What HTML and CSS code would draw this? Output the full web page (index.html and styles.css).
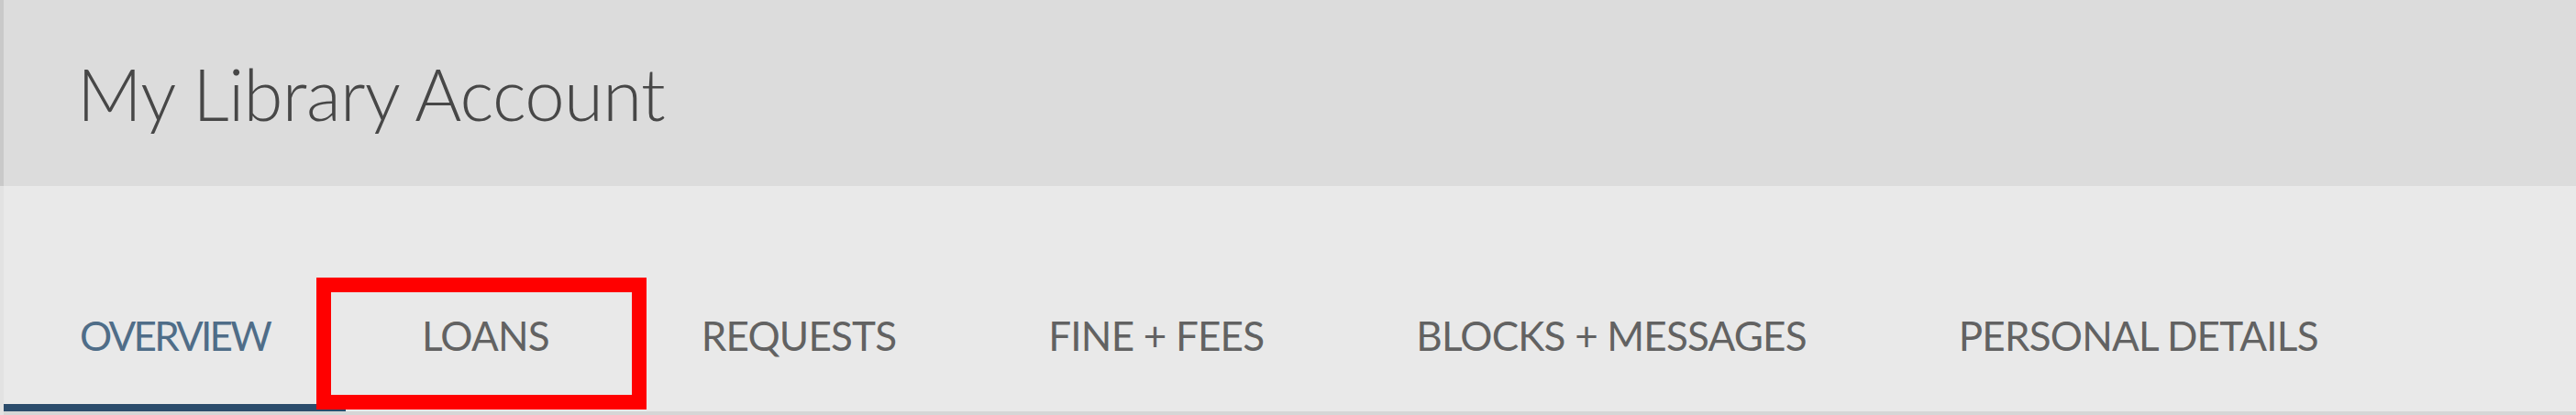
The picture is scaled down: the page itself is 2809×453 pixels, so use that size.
FILE: index.html
```html
<!DOCTYPE html>
<html lang="en">
<head>
  <meta charset="UTF-8">
  <title>My Library Account</title>
  <meta name="viewport" content="width=device-width, initial-scale=1.0">
  <link rel="stylesheet" href="styles.css">
</head>
<body>
  <header class="page-header">
    <h1>My Library Account</h1>
  </header>

  <nav class="account-tabs">
    <ul>
      <li class="active"><a href="#overview">OVERVIEW</a></li>
      <li class="marked"><a href="#loans">LOANS</a></li>
      <li><a href="#requests">REQUESTS</a></li>
      <li><a href="#fines">FINE + FEES</a></li>
      <li><a href="#blocks">BLOCKS + MESSAGES</a></li>
      <li><a href="#personal">PERSONAL DETAILS</a></li>
    </ul>
  </nav>
</body>
</html>
```

FILE: styles.css
```css
body {
  font-family: Lato, 'Open Sans', sans-serif;
  background: #e9e9e9;
  margin: 0;
  padding: 0;
  color: #444;
}
.page-header {
  height: 203px;
  display: flex;
  align-items: center;
  background: #dcdcdc;
  border-left: 4px solid #c9c9c9;
  padding-left: 80px;
}
.page-header h1 {
  margin: 0;
  font-size: 78px;
  font-weight: 300;
  color: #474747;
  letter-spacing: -0.7px;
}
.account-tabs {
  border-left: 4px solid #e2e2e2;
}
.account-tabs ul {
  list-style: none;
  margin: 0;
  padding: 133px 0 0;
  display: flex;
  border-bottom: 4px solid #d6d6d6;
}
.account-tabs li {
  position: relative;
}
.account-tabs a {
  display: block;
  padding: 0 83px 45px;
  line-height: 60px;
  font-size: 44px;
  letter-spacing: -0.8px;
  color: #626262;
  text-decoration: none;
  border-bottom: 8px solid transparent;
}
.account-tabs .active a {
  color: #4f6d88;
  letter-spacing: -2.8px;
  border-bottom-color: #2b4c6c;
}
/* red annotation box round the loans tab */
.account-tabs .marked::after {
  content: "";
  position: absolute;
  top: -33px;
  bottom: 2px;
  left: -32px;
  right: -23px;
  border: 16px solid #ff0000;
}
```
